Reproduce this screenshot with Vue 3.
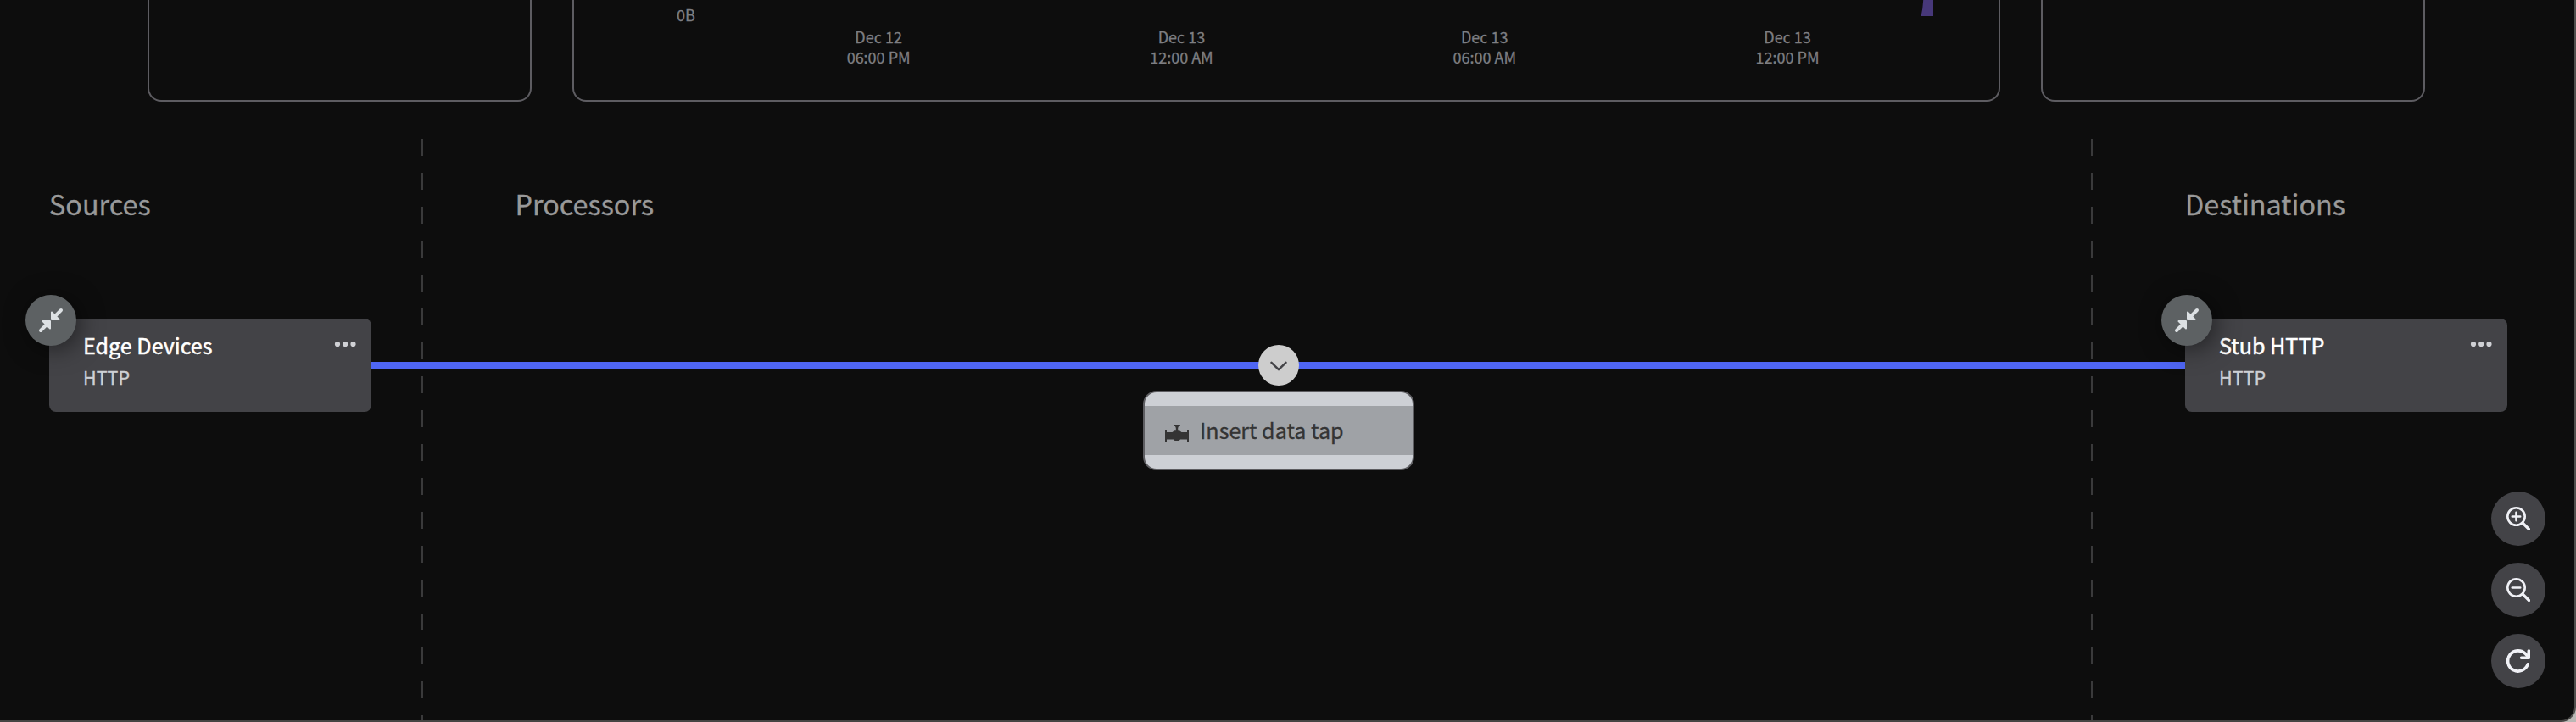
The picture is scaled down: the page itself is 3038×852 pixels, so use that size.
<script setup>
const ticks = [
  ['Dec 12', '06:00 PM'],
  ['Dec 13', '12:00 AM'],
  ['Dec 13', '06:00 AM'],
  ['Dec 13', '12:00 PM'],
]
const nodes = [
  { name: 'Edge Devices', kind: 'HTTP', side: 'left' },
  { name: 'Stub HTTP', kind: 'HTTP', side: 'right' },
]
</script>

<template>
  <div class="window">
    <div class="cards">
      <section class="card"></section>
      <section class="card chart">
        <span class="zero">0B</span>
        <div class="axis">
          <div v-for="t in ticks" :key="t[1]" class="tick">{{ t[0] }}<br />{{ t[1] }}</div>
        </div>
        <svg class="area" width="16" height="20" viewBox="0 0 16 20">
          <path d="M0.6 19Q2.6 11 3.2 0H15V19Z" fill="#47387a" />
        </svg>
      </section>
      <section class="card"></section>
    </div>

    <div class="board">
      <div class="column sources"><h2>Sources</h2></div>
      <div class="column processors"><h2>Processors</h2></div>
      <div class="column destinations"><h2>Destinations</h2></div>

      <div class="edge"></div>
      <div v-for="n in nodes" :key="n.name" class="node" :class="n.side">
        <div class="labels">
          <div class="name">{{ n.name }}</div>
          <div class="kind">{{ n.kind }}</div>
        </div>
        <svg class="dots" width="26" height="8" viewBox="0 0 26 8" fill="#d0d1d5">
          <circle cx="4" cy="4" r="3.1" /><circle cx="13.2" cy="4" r="3.1" /><circle cx="22.5" cy="4" r="3.1" />
        </svg>
        <div class="collapse">
          <svg width="30" height="30" viewBox="0 0 30 30" fill="#dce0e3" stroke="#dce0e3" stroke-linecap="round" stroke-linejoin="round">
            <path d="M27 3L19 11M3 27L11 19" stroke-width="4" />
            <path d="M16 5.5V14H24.5ZM14 24.5V16H5.5Z" stroke-width="2" />
          </svg>
        </div>
      </div>

      <div class="toggle">
        <svg width="20" height="12" viewBox="0 0 20 12" fill="none" stroke="#434347" stroke-width="2.5" stroke-linecap="round" stroke-linejoin="round">
          <path d="M1.5 1.8L10 10.2L18.5 1.8" />
        </svg>
      </div>
      <div class="menu">
        <div class="item">
          <svg width="28" height="20" viewBox="0 0 28 20" fill="#343434">
            <path d="M0 7H2V9H8.5L11 7.2H12.8V4L12 2H10.5Q9.5 1 10.5 0H17.5Q18.5 1 17.5 2H16L15.2 4V7.2H17L19.5 9H26V7H28V20H26V17.5H18L16.5 19H11.5L10 17.5H2V20H0Z" />
          </svg>
          <span>Insert data tap</span>
        </div>
      </div>

      <div class="controls">
        <button>
          <svg width="28" height="28" viewBox="0 0 28 28" class="line">
            <circle cx="11.5" cy="11.5" r="10.2" /><path d="M19 19L26.5 26.5" stroke-width="3.2" /><path d="M6.8 11.5H16.2M11.5 6.8V16.2" />
          </svg>
        </button>
        <button>
          <svg width="28" height="28" viewBox="0 0 28 28" class="line">
            <circle cx="11.5" cy="11.5" r="10.2" /><path d="M19 19L26.5 26.5" stroke-width="3.2" /><path d="M6.8 11.5H16.2" />
          </svg>
        </button>
        <button>
          <svg width="28" height="28" viewBox="0 0 28 28" class="line reload">
            <path d="M25.2 17.8A12.1 12.1 0 1 1 22.5 5.6L26 9.5" /><path d="M26.3 2V10.2H17.6" />
          </svg>
        </button>
      </div>
    </div>
  </div>
</template>

<style>
body {
  background: #b9b8b5;
  overflow: hidden;
}
</style>

<style scoped>
.window {
  position: relative;
  box-sizing: border-box;
  width: 3038px;
  height: 852px;
  overflow: hidden;
  background: #0d0d0d;
  border-right: 2px solid #504f4d;
  border-bottom: 2px solid #454443;
  border-bottom-right-radius: 18px;
  font-family: "Noto Sans CJK SC", "Noto Sans", sans-serif;
  -webkit-text-stroke: 0.3px currentColor;
}
.cards {
  display: grid;
  grid-template-columns: 453px 1684px 453px;
  gap: 48px;
  margin-left: 174px;
  height: 120px;
}
.card {
  box-sizing: border-box;
  border: 2px solid #5d5c61;
  border-top: 0;
  border-radius: 0 0 16px 16px;
}
.chart {
  position: relative;
  color: #7d7e82;
  font-size: 18px;
  line-height: 24px;
}
.zero {
  position: absolute;
  left: 121px;
  top: 5px;
}
.axis {
  display: grid;
  grid-template-columns: repeat(4, 357.3px);
  padding: 31px 0 0 180.5px;
}
.tick {
  text-align: center;
}
.area {
  position: absolute;
  left: 1588px;
  top: 0;
}
.board {
  position: relative;
  display: flex;
  height: 688px;
  margin-top: 44px;
}
.column {
  box-sizing: border-box;
  background: repeating-linear-gradient(#3a3a3b 0 20px, transparent 20px 40px) right top / 2px 100% no-repeat;
}
.column h2 {
  margin: 0;
  padding-top: 54px;
  font-size: 32.4px;
  font-weight: 400;
  line-height: 44px;
  color: #999;
}
.sources {
  width: 499px;
  padding-left: 58px;
}
.processors {
  width: 1969px;
  padding-left: 108.5px;
}
.destinations {
  flex: 1;
  padding-left: 109px;
  background: none;
}
.edge {
  position: absolute;
  left: 438px;
  top: 263px;
  width: 2139px;
  height: 8px;
  background: #4f66f4;
}
.node {
  position: absolute;
  top: 212px;
  display: flex;
  justify-content: space-between;
  box-sizing: border-box;
  width: 380px;
  height: 110px;
  padding: 13px 18px 0 40px;
  border-radius: 8px;
  background: #434347;
}
.left {
  left: 58px;
}
.right {
  left: 2577px;
}
.name {
  color: #fff;
  font-size: 25.1px;
  line-height: 36px;
  -webkit-text-stroke-width: 0.5px;
}
.kind {
  margin-top: 2px;
  color: #cdd0d5;
  font-size: 21.5px;
  line-height: 36px;
}
.dots {
  margin-top: 13px;
}
.collapse {
  position: absolute;
  left: -28px;
  top: -28px;
  display: grid;
  place-items: center;
  width: 60px;
  height: 60px;
  border-radius: 50%;
  background: #5d6163;
  box-shadow: 4px 4px 28px rgba(0, 0, 0, 0.5);
}
.toggle {
  position: absolute;
  left: 1483.5px;
  top: 243px;
  display: grid;
  place-items: center;
  width: 48px;
  height: 48px;
  border-radius: 50%;
  background: #cdcdcd;
}
.toggle svg {
  margin-top: 2px;
}
.menu {
  position: absolute;
  left: 1348px;
  top: 297px;
  box-sizing: border-box;
  width: 320px;
  height: 94px;
  padding: 16px 0;
  border: 2px solid #5d5d61;
  border-radius: 16px;
  background: #cdd0d5;
}
.item {
  display: flex;
  align-items: center;
  gap: 13px;
  height: 58px;
  padding-left: 24px;
  background: #9fa2a6;
  color: #343434;
  font-size: 25.1px;
  line-height: 36px;
}
.item svg {
  margin-top: 6px;
}
.item span {
  margin-top: -2px;
}
.controls {
  position: absolute;
  left: 2938px;
  top: 416px;
  display: flex;
  flex-direction: column;
  gap: 20px;
}
.controls button {
  display: grid;
  place-items: center;
  width: 64px;
  height: 64px;
  padding: 0;
  border: 0;
  border-radius: 50%;
  background: #434347;
}
.line {
  fill: none;
  stroke: #f0f1f6;
  stroke-width: 2.6;
  stroke-linecap: round;
  stroke-linejoin: round;
}
.reload {
  stroke-width: 3.6;
}
</style>
